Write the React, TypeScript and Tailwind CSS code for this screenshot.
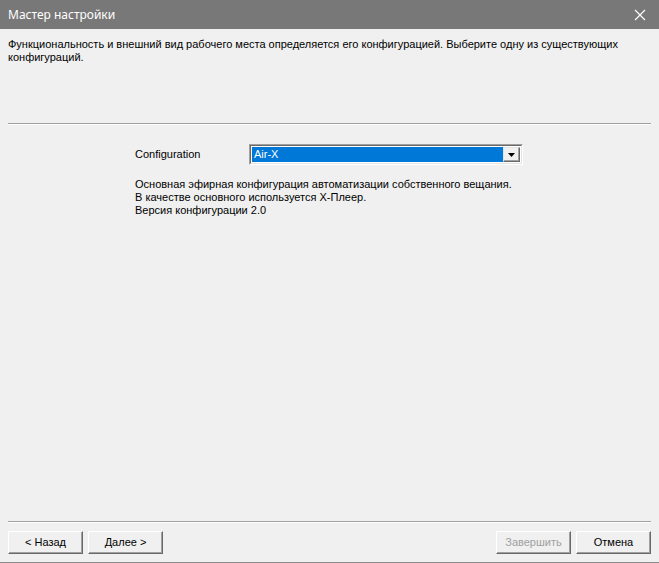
import React from "react";

const ui = { fontFamily: '"Liberation Sans", Arial, sans-serif' };

type ButtonProps = {
  label: string;
  disabled?: boolean;
};

const ClassicButton = ({ label, disabled = false }: ButtonProps) => {
  return (
    <div
      className={`flex h-[23px] w-[75px] items-center justify-center border border-t-white border-l-white border-r-[#696969] border-b-[#696969] bg-[#f0f0f0] text-[11px] shadow-[inset_-1px_-1px_#a0a0a0] ${
        disabled ? "text-[#a0a0a0]" : "text-black"
      }`}
    >
      {label}
    </div>
  );
};

const Separator = () => (
  <div className="mx-2 border-t border-b border-t-[#a0a0a0] border-b-white" />
);

const App = () => {
  return (
    <div
      className="flex h-[563px] w-[659px] flex-col border-b border-b-[#8a8a8a] bg-[#f0f0f0] text-black"
      style={ui}
    >
      {/* title bar */}
      <div className="flex h-[29px] shrink-0 items-center justify-between bg-[#787878] pl-2 pr-[9px]">
        <span
          className="text-[12px] text-white"
          style={{ fontFamily: '"Noto Sans", "Open Sans", sans-serif' }}
        >
          Мастер настройки
        </span>
        <svg width="12" height="12" viewBox="0 0 12 12" className="mr-[4px]">
          <path d="M1 1 L11 11 M11 1 L1 11" stroke="white" strokeWidth="1.2" />
        </svg>
      </div>

      {/* header text */}
      <div className="h-[94px] shrink-0 px-2 pt-[9px] text-[11px] leading-[13px]">
        Функциональность и внешний вид рабочего места определяется его
        конфигурацией. Выберите одну из существующих конфигураций.
      </div>

      <Separator />

      {/* content */}
      <div className="flex flex-1 flex-col pl-[135px] pt-[19px] text-[11px] leading-[13px]">
        <div className="flex items-center">
          <span className="w-[114px]">Configuration</span>
          <div className="flex h-[21px] w-[274px] border border-t-[#a0a0a0] border-l-[#a0a0a0] border-r-white border-b-white">
            <div className="flex flex-1 border border-t-[#696969] border-l-[#696969] border-r-[#e3e3e3] border-b-[#e3e3e3] bg-white p-px">
              <div className="flex flex-1 items-center bg-[#0078d7] pl-[2px] text-white">
                Air-X
              </div>
              <div className="flex w-[17px] items-center justify-center border border-t-[#e3e3e3] border-l-[#e3e3e3] border-r-[#696969] border-b-[#696969] bg-[#f0f0f0] shadow-[inset_-1px_-1px_#a0a0a0]">
                <svg width="7" height="4" viewBox="0 0 7 4">
                  <path d="M0 0 H7 L3.5 4 Z" fill="black" />
                </svg>
              </div>
            </div>
          </div>
        </div>

        <div className="mt-[13px] flex flex-col">
          <span>Основная эфирная конфигурация автоматизации собственного вещания.</span>
          <span>В качестве основного используется X-Плеер.</span>
          <span>Версия конфигурации 2.0</span>
        </div>
      </div>

      <Separator />

      {/* buttons */}
      <div className="flex h-[39px] shrink-0 items-start justify-between px-2 pt-[8px]">
        <div className="flex gap-[5px]">
          <ClassicButton label="< Назад" />
          <ClassicButton label="Далее >" />
        </div>
        <div className="flex gap-[5px]">
          <ClassicButton label="Завершить" disabled />
          <ClassicButton label="Отмена" />
        </div>
      </div>
    </div>
  );
};

export default App;
